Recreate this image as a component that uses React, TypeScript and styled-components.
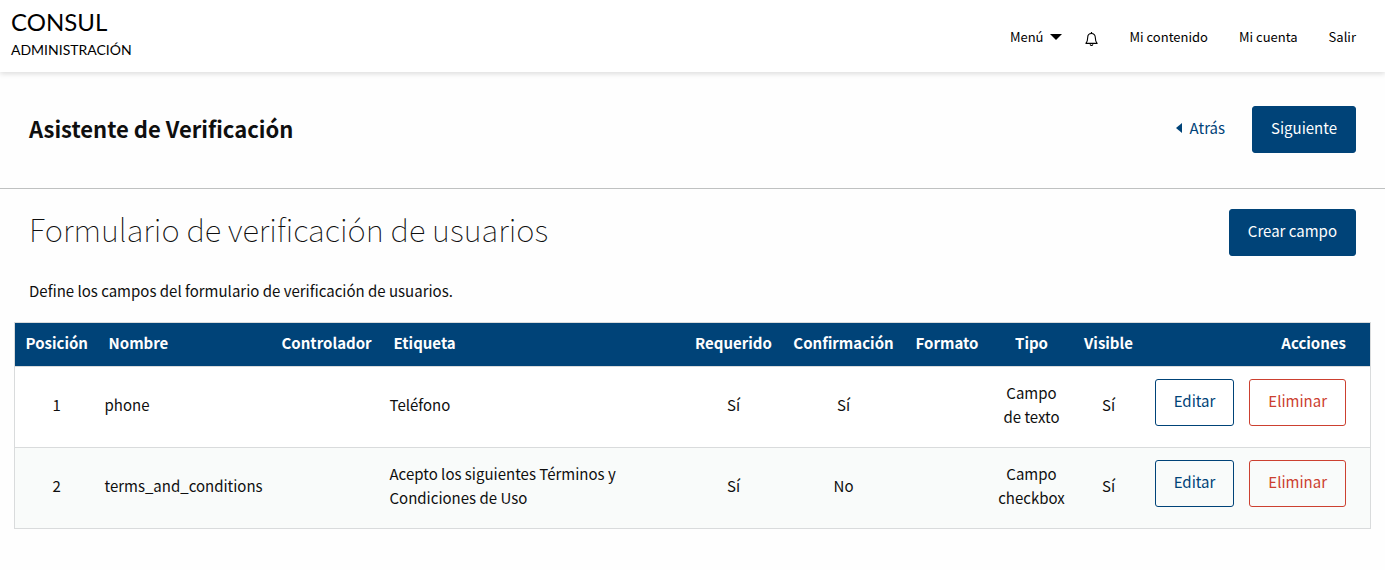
import React from "react";
import styled, { createGlobalStyle, css } from "styled-components";

const brand = "#004378";
const alert = "#cc4030";
const ink = "#0f0f0f";
const line = "#d9dbdc";

const GlobalStyle = createGlobalStyle`
  *, *::before, *::after { box-sizing: border-box; }
  body {
    margin: 0;
    background: #fefefe;
    color: ${ink};
    font-family: "Noto Sans CJK SC", "Noto Sans", sans-serif;
    font-size: 15px;
    line-height: 24px;
  }
  h1, h2, p { margin: 0; }
  a { text-decoration: none; }
`;

const TopBar = styled.header`
  display: flex;
  justify-content: space-between;
  align-items: center;
  height: 72px;
  padding: 0 29px 0 11px;
  background: #fff;
  box-shadow: 0 2px 5px rgba(0, 0, 0, 0.13);
`;

const Brand = styled.a`
  display: flex;
  flex-direction: column;
  padding-bottom: 4px;
  color: #000;
  font-family: Lato, sans-serif;
`;

const BrandName = styled.span`
  font-size: 24px;
  line-height: 32px;
`;

const BrandSection = styled.span`
  font-size: 14px;
  line-height: 24px;
`;

const Nav = styled.nav`
  display: flex;
  align-items: center;
  gap: 31px;
  padding-top: 2px;
`;

const navItem = css`
  color: #000;
  font-family: inherit;
  font-size: 13px;
  line-height: 20px;
`;

const NavLink = styled.a`
  ${navItem}
`;

const MenuGroup = styled.div`
  display: flex;
  align-items: center;
  gap: 23px;
`;

const MenuButton = styled.button`
  ${navItem}
  display: flex;
  align-items: center;
  gap: 7px;
  padding: 0;
  border: 0;
  background: none;
`;

const BellLink = styled.a`
  display: flex;
  padding-top: 4px;
  color: #000;
`;

const WizardBar = styled.section`
  display: flex;
  justify-content: space-between;
  align-items: center;
  padding: 34px 29px 35px;
  border-bottom: 1px solid #bfc1c1;
`;

const WizardTitle = styled.h2`
  padding-bottom: 4px;
  font-size: 22px;
  line-height: 32px;
  font-weight: 700;
`;

const WizardActions = styled.div`
  display: flex;
  align-items: center;
  gap: 27px;
`;

const BackLink = styled.a`
  display: flex;
  align-items: center;
  gap: 8px;
  padding-bottom: 3px;
  color: ${brand};
`;

const Button = styled.button<{ $kind: "solid" | "hollow" | "alert" }>`
  height: 47px;
  padding: 0 18px 3px;
  border: 1px solid ${(p) => (p.$kind === "alert" ? alert : brand)};
  border-radius: 3px;
  background: ${(p) => (p.$kind === "solid" ? brand : "transparent")};
  color: ${(p) => (p.$kind === "solid" ? "#fefefe" : p.$kind === "alert" ? alert : brand)};
  font-family: inherit;
  font-size: 15px;
  line-height: 24px;
  white-space: nowrap;
`;

const Main = styled.main`
  padding: 20px 14px 40px;
`;

const PageHead = styled.div`
  display: flex;
  justify-content: space-between;
  align-items: flex-start;
  padding: 0 15px;
`;

const PageTitle = styled.h1`
  font-size: 31px;
  line-height: 40px;
  font-weight: 100;
`;

const Intro = styled.p`
  padding: 23px 15px 19px;
`;

const Table = styled.table`
  width: 100%;
  table-layout: fixed;
  border-collapse: collapse;
  border: 1px solid ${line};
`;

const Col = styled.col<{ $w?: number }>`
  width: ${(p) => (p.$w ? `${p.$w}px` : "auto")};
`;

const HeadRow = styled.tr`
  background: ${brand};
  color: #fefefe;
`;

type Align = "left" | "center" | "right";

const Th = styled.th<{ $align: Align }>`
  height: 44px;
  padding: 0 ${(p) => (p.$align === "right" ? 24 : 10)}px 4px 10px;
  text-align: ${(p) => p.$align};
  font-weight: 700;
  white-space: nowrap;
`;

const Row = styled.tr`
  height: 81px;
  border-top: 1px solid ${line};
  background: #fff;
  &:nth-child(even) { background: #f9fbfa; }
`;

const Td = styled.td<{ $align: Align }>`
  padding: 0 6px 4px;
  text-align: ${(p) => p.$align};
  vertical-align: middle;
`;

const ActionsCell = styled.td`
  padding: 0 24px 10px 0;
`;

const RowActions = styled.div`
  display: flex;
  justify-content: flex-end;
  gap: 15px;
`;

const columns: { label: string; align: Align; width?: number }[] = [
  { label: "Posición", align: "center", width: 84 },
  { label: "Nombre", align: "left", width: 173 },
  { label: "Controlador", align: "left", width: 112 },
  { label: "Etiqueta", align: "left" },
  { label: "Requerido", align: "center", width: 98 },
  { label: "Confirmación", align: "center", width: 122 },
  { label: "Formato", align: "center", width: 85 },
  { label: "Tipo", align: "center", width: 84 },
  { label: "Visible", align: "center", width: 70 },
  { label: "Acciones", align: "right", width: 227 },
];

const fields: string[][] = [
  ["1", "phone", "", "Teléfono", "Sí", "Sí", "", "Campo de\u00a0texto", "Sí"],
  ["2", "terms_and_conditions", "", "Acepto los siguientes Términos y Condiciones de Uso", "Sí", "No", "", "Campo checkbox", "Sí"],
];

const CaretDown = () => (
  <svg width="12" height="6" viewBox="0 0 12 6" aria-hidden="true">
    <path d="M0 0H12L6 6Z" fill="currentColor" />
  </svg>
);

const CaretLeft = () => (
  <svg width="6" height="10" viewBox="0 0 6 10" aria-hidden="true">
    <path d="M6 0V10L0 5Z" fill="currentColor" />
  </svg>
);

const Bell = () => (
  <svg width="13" height="14" viewBox="0 0 13 14" fill="none" stroke="currentColor" aria-hidden="true">
    <path d="M6.500 1.500C4.200 1.500 2.700 3.200 2.700 5.500C2.700 8.600 2.100 9.900 0.900 11.400H12.100C10.900 9.900 10.300 8.600 10.300 5.500C10.300 3.200 8.800 1.500 6.500 1.500Z" strokeWidth="1.100" strokeLinejoin="round" />
    <path d="M6.500 0V1.500" strokeWidth="1.200" />
    <path d="M5.200 12.200C5.200 13.900 7.800 13.900 7.800 12.200" strokeWidth="1.100" />
  </svg>
);

export default function App() {
  return (
    <>
      <GlobalStyle />
      <TopBar>
        <Brand href="#">
          <BrandName>CONSUL</BrandName>
          <BrandSection>ADMINISTRACIÓN</BrandSection>
        </Brand>
        <Nav>
          <MenuGroup>
            <MenuButton type="button">
              Menú
              <CaretDown />
            </MenuButton>
            <BellLink href="#" aria-label="Notificaciones">
              <Bell />
            </BellLink>
          </MenuGroup>
          <NavLink href="#">Mi contenido</NavLink>
          <NavLink href="#">Mi cuenta</NavLink>
          <NavLink href="#">Salir</NavLink>
        </Nav>
      </TopBar>
      <WizardBar>
        <WizardTitle>Asistente de Verificación</WizardTitle>
        <WizardActions>
          <BackLink href="#">
            <CaretLeft />
            Atrás
          </BackLink>
          <Button type="button" $kind="solid">Siguiente</Button>
        </WizardActions>
      </WizardBar>
      <Main>
        <PageHead>
          <PageTitle>Formulario de verificación de usuarios</PageTitle>
          <Button type="button" $kind="solid">Crear campo</Button>
        </PageHead>
        <Intro>Define los campos del formulario de verificación de usuarios.</Intro>
        <Table>
          <colgroup>
            {columns.map((c) => (
              <Col key={c.label} $w={c.width} />
            ))}
          </colgroup>
          <thead>
            <HeadRow>
              {columns.map((c) => (
                <Th key={c.label} scope="col" $align={c.align}>{c.label}</Th>
              ))}
            </HeadRow>
          </thead>
          <tbody>
            {fields.map((cells) => (
              <Row key={cells[1]}>
                {cells.map((text, i) => (
                  <Td key={columns[i].label} $align={columns[i].align}>{text}</Td>
                ))}
                <ActionsCell>
                  <RowActions>
                    <Button type="button" $kind="hollow">Editar</Button>
                    <Button type="button" $kind="alert">Eliminar</Button>
                  </RowActions>
                </ActionsCell>
              </Row>
            ))}
          </tbody>
        </Table>
      </Main>
    </>
  );
}
